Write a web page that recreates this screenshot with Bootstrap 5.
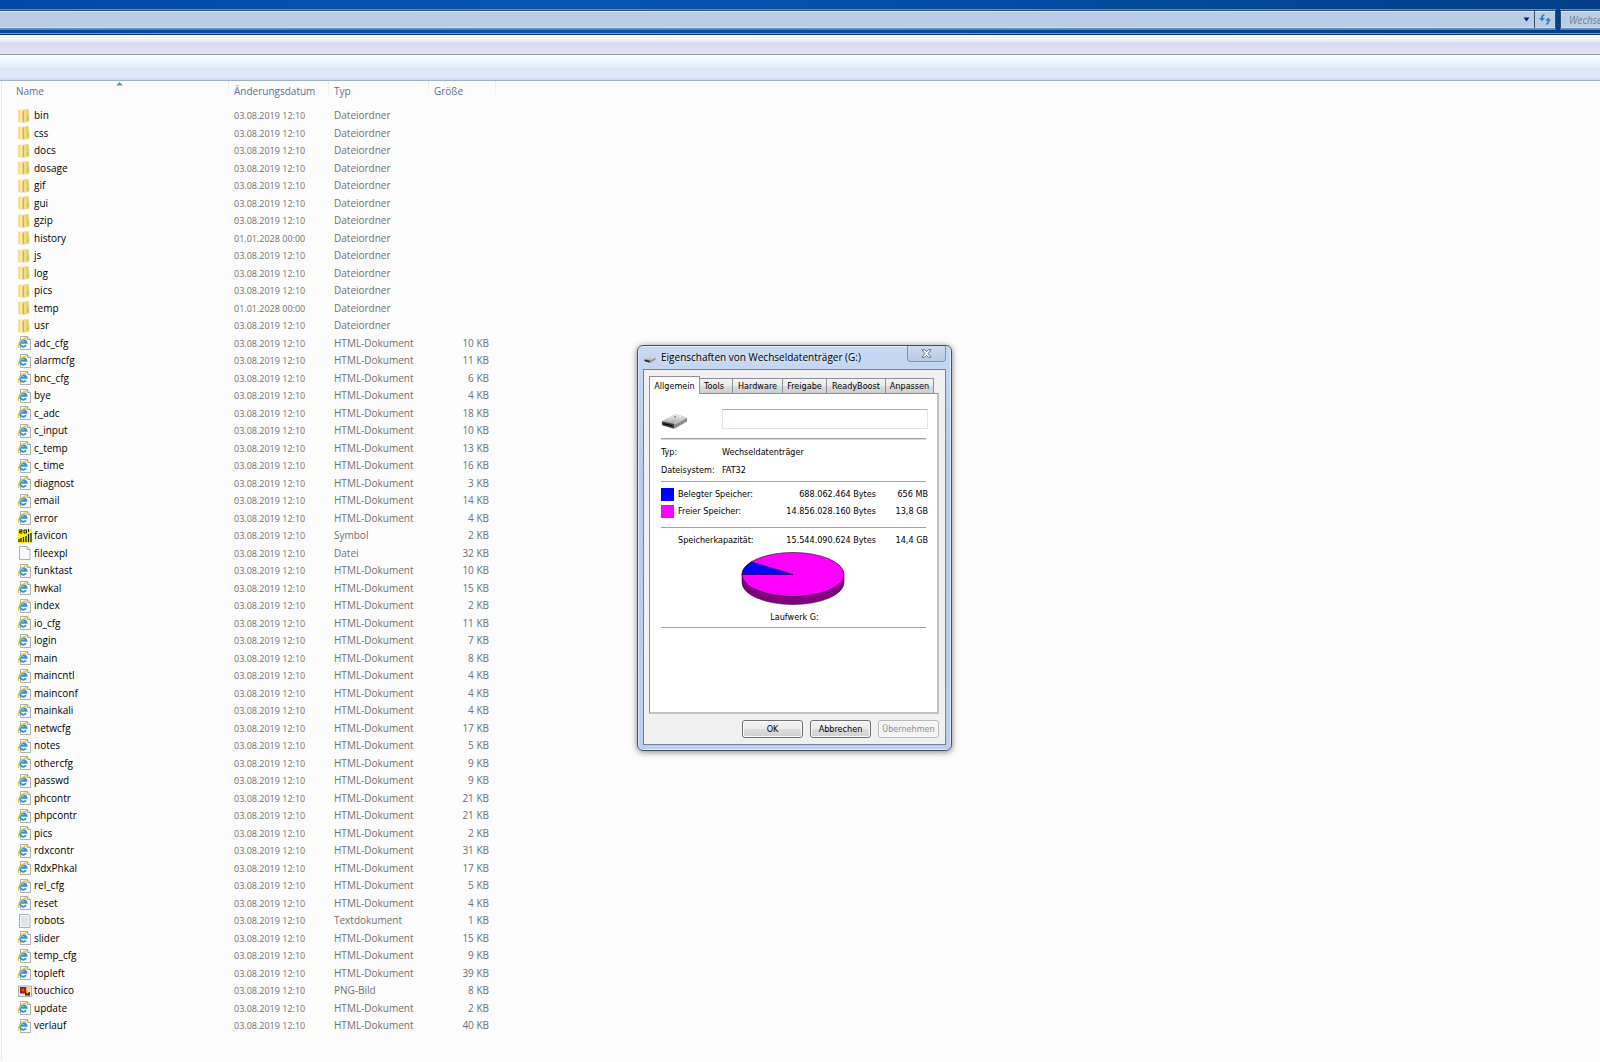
<!DOCTYPE html>
<html lang="de">
<head>
<meta charset="utf-8">
<meta name="viewport" content="width=device-width, initial-scale=1">
<title>Wechseldatenträger (G:)</title>
<link href="https://cdn.jsdelivr.net/npm/bootstrap@5.3.0/dist/css/bootstrap.min.css" rel="stylesheet">
<style>
body{background:#fcfcfc;font-family:"Open Sans","Noto Sans",sans-serif;font-size:10px;line-height:17px;color:#111;min-height:100vh;overflow-x:hidden}
.glass{background:linear-gradient(90deg,#0249a6,#0656b2 35%,#024a9e 70%,#013f8c);height:35px;padding-top:10px;border-bottom:1px solid #17365f;box-shadow:inset 0 -1px #6f9fd4}
.addr,.seek{height:19px;border:1px solid #33506f;border-bottom-color:#6c8fb8;background:#bacde6;box-shadow:0 -1px #5b8ccb,0 1px #4d84c4,inset 0 1px #dce8f5,inset 0 -1px #cfdff0}
.addr{border-left:0}
.seek{width:40px;border-right:0;border-radius:0;padding:0 0 0 8px;font-size:10px;font-style:italic;outline:0;min-width:0}
.seek::placeholder{color:#6f7f92;opacity:1}
.flatbtn{background:none;border:0;padding:0;width:16px;display:flex;align-items:center;justify-content:center}
.reload{border-left:1px solid #33506f;width:21px}
.menubar{height:20px;background:linear-gradient(#fff,#e9edf6 35%,#d6dbee 40%,#e2e3f4);border-bottom:1px solid #9196ad}
.toolstrip{height:26px;background:linear-gradient(#fff,#e9f5fd 30%,#e4f0fa 48%,#dce6f4 52%,#dde7f5 90%,#c8d6e8);border-bottom:1px solid #9fb1ca}
.pane{border-left:1px solid #e2eaf5;margin-left:1px;min-height:980px}
.files{table-layout:fixed;width:494px;color:#717171}
.files col.c-name{width:227px}.files col.c-mid{width:100px}.files col.c-size{width:67px}
.files th{height:26px;padding:2px 7px 0 5px;vertical-align:top;font-weight:400;color:#5c6f8c;background:linear-gradient(#dce8f8,#fcfcfc) no-repeat right top/1px 17px}
.files td{height:17px;padding:0 7px 0 5px;white-space:nowrap;line-height:17px}
.files tr:nth-child(even) td{height:18px}
.files th:first-child,.files td:first-child{padding-left:14px}
.files td:first-child{color:#000}
.files td:nth-child(2){font-size:9px}
.files td:last-child{text-align:right}
.files svg{width:14px;height:14px;margin:0 2px;flex:none}
.sorter{left:114px;top:1px}
.props{left:637px;top:345px;width:315px;border:1px solid #47525f;border-radius:6px;background:linear-gradient(#c6d8f2,#b4cbee 30%,#b9cef0);box-shadow:0 1px 6px rgba(0,0,0,.5),inset 0 0 0 1px #dfeafa;padding:0 5px 5px;font-family:"DejaVu Sans Condensed","DejaVu Sans",sans-serif;font-size:9px;line-height:12px;color:#000}
.caption{height:23px;padding-left:1px}
.caption h1{font:400 10px/15px "Open Sans",sans-serif;margin:4px 0 0 5px;text-shadow:0 0 6px #fff}
.shut{width:39px;height:16px;padding:0;border:1px solid #8593ab;border-top:0;border-radius:0 0 4px 4px;background:linear-gradient(#ccdaf0,#b8cae6);display:flex;align-items:center;justify-content:center}
.client{border:1px solid #77828f;background:#f0f0f0;padding:7px 6px 6px 5px}
.tabs button{border:1px solid #8e9096;border-bottom:0;border-left-width:0;background:linear-gradient(#f2f2f2,#ebebeb 50%,#dcdcdc 52%,#cfcfcf);height:15px;padding:0;line-height:14px;color:#000;white-space:nowrap}
.tabs button.on{height:18px;background:#fff;margin:-1px 0 -1px;position:relative;border-left-width:1px;line-height:14px}
.sheet{border:1px solid #8e9096;border-right:2px solid #c0c0c6;border-bottom:2px solid #c0c0c6;background:#fff;height:321px;padding:15px 9px 0 11px}
.label-box{width:206px;height:20px;border:1px solid #e0e4ec;border-top-color:#abadb3;outline:0}
.rule{height:1px;background:#a0a0a0;margin:2px 2px 4px 0}
.rule.wide{margin-top:8px;box-shadow:0 1px #d8d8d8}
.rule.low{margin-top:7px}
.pair dt,.pair dd{font-weight:400;margin:0;line-height:18px}
.pair dt{width:61px}
.space{display:grid;grid-template-columns:17px 1fr 90px 52px;line-height:17px;text-align:right;align-items:center;white-space:nowrap}
.space span:nth-child(2){text-align:left}
.swatch{width:13px;height:13px}
.used{background:#00f}.free{background:#f0f}
.chart{margin:3px 4px 0 0;text-align:center}
.dlg{width:61px;height:18px;padding:0;border:1px solid #707070;border-radius:3px;background:linear-gradient(#f3f3f3,#ebebeb 50%,#dddddd 52%,#cfcfcf);box-shadow:inset 0 0 0 1px #fafafa;line-height:15px;color:#000}
.dlg:disabled{border-color:#b4b8bc;background:#f4f4f4;color:#8c8c8c}
.actions{gap:7px;padding-top:6px}
</style>
</head>
<body>
<svg width="0" height="0" class="position-absolute" aria-hidden="true">
<defs>
<linearGradient id="gold"><stop offset="0" stop-color="#ecd77c"/><stop offset=".3" stop-color="#fbf0ae"/><stop offset="1" stop-color="#e0c25a"/></linearGradient>
<linearGradient id="steel" x2="0" y2="1"><stop offset="0" stop-color="#f2f2f2"/><stop offset="1" stop-color="#a8a8a8"/></linearGradient>
</defs>
<symbol id="i-folder" viewBox="0 0 14 14"><path d="M.5 1h5l1-.5h4v3.500l.5 1v7.500l-3.500.5-1.500.8-5.500-1z" fill="url(#gold)" stroke="#e6d48c" stroke-width=".5"/><path d="M4.500 2.500l1.800-1.500v12.300l-1.800-.7z" fill="#d3b14c"/><path d="M6.800 1v12" stroke="#f7e694" stroke-width=".8"/><path d="M10 8.500v2" stroke="#8db38a"/></symbol>
<symbol id="i-ie" viewBox="0 0 14 14"><path d="M2.500 .5h7l3 3v10h-10z" fill="#fdfdfd" stroke="#9a9a9a" stroke-width=".8"/><path d="M9.500.5v3h3" fill="#eee" stroke="#8e8e8e" stroke-width=".8"/><path d="M8 9.300a3.300 3.300 0 1 1 .5-2.500h-5.500" fill="none" stroke="#2b95e2" stroke-width="2"/><path d="M1 11.800c-2-1.800 1-7 4.500-9 2-1.200 4-1.500 3.700.6" fill="none" stroke="#ecc431" stroke-width="1.400"/></symbol>
<symbol id="i-fav" viewBox="0 0 14 14"><path d="M0 0h14v14h-14z" fill="#f7ef16"/><path d="M1 1h3v1.500h-2.500v1.500h3M6 1h2.500v3h-2.500zM10.500 0v3" fill="none" stroke="#222"/><path d="M1 13v-3M3 13v-4M5.500 13v-5M8 13v-6M10.500 13v-8M13 13v-9" stroke="#222" stroke-width="1.300"/></symbol>
<symbol id="i-file" viewBox="0 0 14 14"><path d="M1.500 .5h7.500l3 3v10h-10.500z" fill="#fafafa" stroke="#9c9c9c" stroke-width=".8"/><path d="M9 .5v3h3" fill="#e2e2e2" stroke="#9c9c9c" stroke-width=".8"/></symbol>
<symbol id="i-text" viewBox="0 0 14 14"><path d="M1.500 .5h9l1.500 1.500v11.500h-10.500z" fill="#f8fafb" stroke="#999" stroke-width=".8"/><path d="M3 3h7.500M3 5h7.500M3 7h7.500M3 9h7.500M3 11h7.500" stroke="#b7c3cb" stroke-width=".8"/></symbol>
<symbol id="i-png" viewBox="0 0 14 14"><path d="M.5 2h13v10.500h-13z" fill="#eee" stroke="#999" stroke-width=".8"/><path d="M2 3h6.500v6.500h-6.500z" fill="#a8180c"/><path d="M8.500 3h4v4h-4z" fill="#f2d59a"/><path d="M7 8h5v3.500h-5z" fill="#5a1a0c"/><circle cx="5" cy="6" r="1.500" fill="#d85b1c"/><circle cx="9.500" cy="8.500" r="1.200" fill="#f0b030"/></symbol>
<symbol id="i-drive" viewBox="0 0 28 16"><path d="M1 8l12-6.500q2-1 4-.5l9 2.500q1 .5 1 1.500v3l-12 7q-1.500.7-3 .3l-10-3q-1-.3-1-1z" fill="#8d8d8d"/><path d="M1 7.500l12-6q2-1 4-.5l9.500 2.500-12.500 6.500z" fill="url(#steel)"/><path d="M1 8l12.500 2.800v4.200l-11.500-3.200q-1-.3-1-1z" fill="#3c3c3c"/><path d="M3 9.800l8.500 2v1.500l-8.500-2.200z" fill="#0a0a0a"/><path d="M14 10.500l12.500-6.500" stroke="#fff" stroke-width=".7"/><circle cx="14.500" cy="3" r="1" fill="#888"/></symbol>
</svg>

<header>
<div class="glass d-flex">
<div class="addr d-flex flex-grow-1 justify-content-end">
<button class="flatbtn" aria-label="Vorherige Orte"><svg width="7" height="5"><path d="M.5.500h6l-3 4z" fill="#0b1670"/></svg></button>
<button class="flatbtn reload" aria-label="Aktualisieren"><svg width="12" height="11" viewBox="0 0 12 11"><path d="M5.500 1q-2.500-.3-2.500 3.500M7 10q2.500.3 2.500-3.500" fill="none" stroke="#2c79c8" stroke-width="1.700"/><path d="M0 4h6l-3 3.200zM6.300 6.700h5.700l-2.700-3.200z" fill="#2c79c8"/></svg></button>
</div>
<input class="seek ms-1" type="text" aria-label="Suchen" placeholder="Wechseldatenträger (G:) durchsuchen">
</div>
<div class="menubar"></div>
<div class="toolstrip"></div>
</header>

<main class="pane position-relative">
<svg class="sorter position-absolute" width="7" height="4"><path d="M0 3.500l3.500-3.500 3.500 3.500z" fill="#5f93b4"/></svg>
<table class="files">
<colgroup><col class="c-name"><col class="c-mid"><col class="c-mid"><col class="c-size"></colgroup>
<thead><tr><th scope="col">Name</th><th scope="col">Änderungsdatum</th><th scope="col">Typ</th><th scope="col">Größe</th></tr></thead>
<tbody id="rows"></tbody>
</table>
</main>

<section class="props position-absolute" role="dialog" aria-labelledby="cap">
<div class="caption d-flex align-items-start">
<svg class="mt-2" width="12" height="11" viewBox="0 0 28 16"><use href="#i-drive" width="28" height="16"/></svg>
<h1 id="cap" class="flex-grow-1">Eigenschaften von Wechseldatenträger (G:)</h1>
<button class="shut" aria-label="Schließen"><svg width="11" height="9" viewBox="0 0 12 10"><path d="M1 .8h3l2 2.200 2-2.200h3l-3.300 4.200 3.300 4.200h-3l-2-2.200-2 2.200h-3l3.300-4.200z" fill="#fff" stroke="#5b6474"/></svg></button>
</div>
<div class="client">
<div class="tabs d-flex align-items-end" role="tablist">
<button class="on" role="tab" style="width:51px">Allgemein</button>
<button role="tab" style="width:33px" class="pe-1">Tools</button>
<button role="tab" style="width:50px">Hardware</button>
<button role="tab" style="width:44px">Freigabe</button>
<button role="tab" style="width:59px">ReadyBoost</button>
<button role="tab" style="width:48px">Anpassen</button>
</div>
<div class="sheet">
<div class="d-flex justify-content-between align-items-start">
<svg class="mt-1" width="27" height="17" viewBox="0 0 28 16"><use href="#i-drive" width="28" height="16"/></svg>
<input class="label-box" type="text" aria-label="Datenträgerbezeichnung">
</div>
<div class="rule wide"></div>
<dl class="pair m-0"><div class="d-flex"><dt>Typ:</dt><dd>Wechseldatenträger</dd></div>
<div class="d-flex"><dt>Dateisystem:</dt><dd>FAT32</dd></div></dl>
<div class="rule"></div>
<div class="space"><span class="swatch used"></span><span>Belegter Speicher:</span><span>688.062.464 Bytes</span><span>656 MB</span></div>
<div class="space"><span class="swatch free"></span><span>Freier Speicher:</span><span>14.856.028.160 Bytes</span><span>13,8 GB</span></div>
<div class="rule low"></div>
<div class="space"><span></span><span>Speicherkapazität:</span><span>15.544.090.624 Bytes</span><span>14,4 GB</span></div>
<div class="chart">
<svg class="d-block mx-auto" width="104" height="55" viewBox="0 0 104 55"><path d="M1 22.500v8a51 22 0 0 0 102 0v-8z" fill="#800080" stroke="#4a004a" stroke-width=".6"/><ellipse cx="52" cy="22.500" rx="51" ry="22" fill="#f0f" stroke="#400040" stroke-width=".7"/><path d="M52 22.500h-51a51 22 0 0 1 9.500-12.500z" fill="#00f" stroke="#200040" stroke-width=".7"/></svg>
<div class="mt-1 ps-1">Laufwerk G:</div>
</div>
<div class="rule mt-1"></div>
</div>
<div class="actions d-flex justify-content-end">
<button class="dlg">OK</button><button class="dlg">Abbrechen</button><button class="dlg" disabled>Übernehmen</button>
</div>
</div>
</section>

<script>
const folders = "bin css docs dosage gif gui gzip history js log pics temp usr".split(" ");
const files = "adc_cfg 10,alarmcfg 11,bnc_cfg 6,bye 4,c_adc 18,c_input 10,c_temp 13,c_time 16,diagnost 3,email 14,error 4,favicon 2,fileexpl 32,funktast 10,hwkal 15,index 2,io_cfg 11,login 7,main 8,maincntl 4,mainconf 4,mainkali 4,netwcfg 17,notes 5,othercfg 9,passwd 9,phcontr 21,phpcontr 21,pics 2,rdxcontr 31,RdxPhkal 17,rel_cfg 5,reset 4,robots 1,slider 15,temp_cfg 9,topleft 39,touchico 8,update 2,verlauf 40".split(",");
const special = {favicon:["fav","Symbol"],fileexpl:["file","Datei"],robots:["text","Textdokument"],touchico:["png","PNG-Bild"]};
const row = (icon, name, date, type, size) =>
  `<tr><td><div class="d-flex align-items-center"><svg aria-hidden="true"><use href="#i-${icon}"/></svg>${name}</div></td><td>${date}</td><td>${type}</td><td>${size}</td></tr>`;
const day = "03.08.2019 12:10";
document.getElementById("rows").innerHTML =
  folders.map(n => row("folder", n, n === "history" || n === "temp" ? "01.01.2028 00:00" : day, "Dateiordner", "")).join("") +
  files.map(f => {
    const [n, kb] = f.split(" ");
    const [icon, type] = special[n] || ["ie", "HTML-Dokument"];
    return row(icon, n, day, type, kb + " KB");
  }).join("");
</script>
<script src="https://cdn.jsdelivr.net/npm/bootstrap@5.3.0/dist/js/bootstrap.bundle.min.js"></script>
</body>
</html>
